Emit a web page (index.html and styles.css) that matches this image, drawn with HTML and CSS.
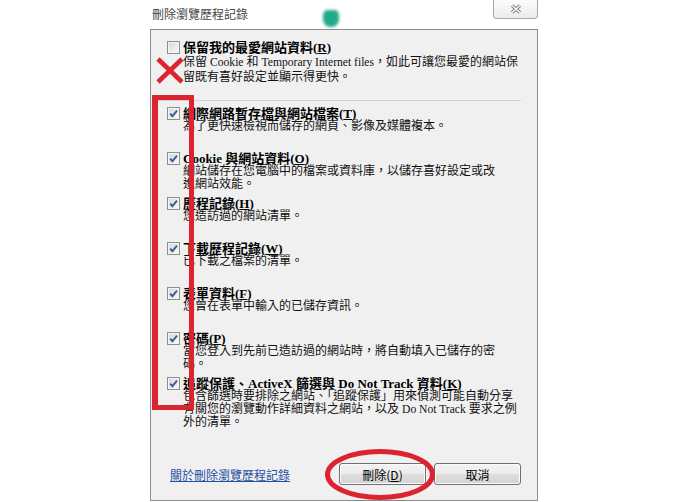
FILE: index.html
```html
<!DOCTYPE html>
<html>

<head>
    <meta charset="utf-8">
    <title>刪除瀏覽歷程記錄</title>
    <link rel="stylesheet" href="styles.css">
</head>

<body>
    <div class="window">
        <div class="titlebar">
            <span class="title">刪除瀏覽歷程記錄</span>
            <div class="close">
                <svg width="12" height="10" viewBox="0 0 12 10">
                    <path d="M2 1.5 L10 8.5 M10 1.5 L2 8.5" stroke="#7d7d7d" stroke-width="3.4" fill="none"/>
                    <path d="M2 1.5 L10 8.5 M10 1.5 L2 8.5" stroke="#ffffff" stroke-width="1.4" fill="none"/>
                </svg>
            </div>
        </div>

        <div class="panel">
            <div class="item first">
                <span class="box"></span>
                <div class="text">
                    <div class="name">保留我的最愛網站資料(<u>R</u>)</div>
                    <div class="desc">保留 <span class="lat">Cookie</span> 和 <span class="lat">Temporary Internet files</span>，如此可讓您最愛的網站保<br>留既有喜好設定並顯示得更快。</div>
                </div>
            </div>

            <div class="sep"></div>

            <div class="list">
                <div class="item">
                    <span class="box checked"><svg width="11" height="11" viewBox="0 0 11 11"><path d="M2.2 5.6 L4.4 8.2 L9 2.6" stroke="#3a5a9c" stroke-width="1.9" fill="none"/></svg></span>
                    <div class="text">
                        <div class="name">網際網路暫存檔與網站檔案(<u>T</u>)</div>
                        <div class="desc">為了更快速檢視而儲存的網頁、影像及媒體複本。</div>
                    </div>
                </div>
                <div class="item">
                    <span class="box checked"><svg width="11" height="11" viewBox="0 0 11 11"><path d="M2.2 5.6 L4.4 8.2 L9 2.6" stroke="#3a5a9c" stroke-width="1.9" fill="none"/></svg></span>
                    <div class="text">
                        <div class="name">Cookie 與網站資料(<u>O</u>)</div>
                        <div class="desc">網站儲存在您電腦中的檔案或資料庫，以儲存喜好設定或改<br>進網站效能。</div>
                    </div>
                </div>
                <div class="item">
                    <span class="box checked"><svg width="11" height="11" viewBox="0 0 11 11"><path d="M2.2 5.6 L4.4 8.2 L9 2.6" stroke="#3a5a9c" stroke-width="1.9" fill="none"/></svg></span>
                    <div class="text">
                        <div class="name">歷程記錄(<u>H</u>)</div>
                        <div class="desc">您造訪過的網站清單。</div>
                    </div>
                </div>
                <div class="item">
                    <span class="box checked"><svg width="11" height="11" viewBox="0 0 11 11"><path d="M2.2 5.6 L4.4 8.2 L9 2.6" stroke="#3a5a9c" stroke-width="1.9" fill="none"/></svg></span>
                    <div class="text">
                        <div class="name">下載歷程記錄(<u>W</u>)</div>
                        <div class="desc">已下載之檔案的清單。</div>
                    </div>
                </div>
                <div class="item">
                    <span class="box checked"><svg width="11" height="11" viewBox="0 0 11 11"><path d="M2.2 5.6 L4.4 8.2 L9 2.6" stroke="#3a5a9c" stroke-width="1.9" fill="none"/></svg></span>
                    <div class="text">
                        <div class="name">表單資料(<u>F</u>)</div>
                        <div class="desc">您曾在表單中輸入的已儲存資訊。</div>
                    </div>
                </div>
                <div class="item">
                    <span class="box checked"><svg width="11" height="11" viewBox="0 0 11 11"><path d="M2.2 5.6 L4.4 8.2 L9 2.6" stroke="#3a5a9c" stroke-width="1.9" fill="none"/></svg></span>
                    <div class="text">
                        <div class="name">密碼(<u>P</u>)</div>
                        <div class="desc">當您登入到先前已造訪過的網站時，將自動填入已儲存的密<br>碼。</div>
                    </div>
                </div>
                <div class="item last">
                    <span class="box checked"><svg width="11" height="11" viewBox="0 0 11 11"><path d="M2.2 5.6 L4.4 8.2 L9 2.6" stroke="#3a5a9c" stroke-width="1.9" fill="none"/></svg></span>
                    <div class="text">
                        <div class="name">追蹤保護、ActiveX 篩選與 Do Not Track 資料(<u>K</u>)</div>
                        <div class="desc">包含篩選時要排除之網站、「追蹤保護」用來偵測可能自動分享<br>有關您的瀏覽動作詳細資料之網站，以及 <span class="lat">Do Not Track</span> 要求之例<br>外的清單。</div>
                    </div>
                </div>
            </div>

            <div class="footer">
                <a href="#" class="link">關於刪除瀏覽歷程記錄</a>
                <div class="buttons">
                    <button class="btn">刪除(<u>D</u>)</button>
                    <button class="btn">取消</button>
                </div>
            </div>
        </div>
    </div>

    <!-- aero glass bleed in the title bar -->
    <div class="glow"></div>

    <!-- red annotations drawn over the screenshot -->
    <svg class="mark-x" width="30" height="30" viewBox="0 0 30 30">
        <path d="M3 3 L27 26 M27 3 L3 26" stroke="#dc2430" stroke-width="4.6" fill="none"/>
    </svg>
    <div class="mark-box"></div>
    <svg class="mark-ring" width="116" height="58" viewBox="0 0 116 58">
        <ellipse cx="58" cy="28.5" rx="52.5" ry="23" stroke="#dc2430" stroke-width="5" fill="none"/>
    </svg>
</body>

</html>
```

FILE: styles.css
```css
body {
    margin: 0;
    width: 700px;
    height: 502px;
    overflow: hidden;
    position: relative;
    background-color: #ffffff;
    font-family: "Liberation Serif", "Noto Sans CJK TC", serif;
    font-size: 12px;
    color: #111111;
}

.window {
    margin-left: 150px;
    width: 388px;
}

.titlebar {
    height: 29px;
    display: flex;
    justify-content: space-between;
    align-items: flex-start;
}

.title {
    font-family: "Noto Sans CJK TC", sans-serif;
    font-size: 12px;
    line-height: 14px;
    color: #454545;
    padding: 7px 0 0 2px;
}

.close {
    width: 45px;
    height: 20px;
    margin-top: -1px;
    box-sizing: border-box;
    border: 1px solid #a8a8a8;
    border-top: none;
    border-radius: 0 0 4px 4px;
    background: linear-gradient(#fdfdfd, #ececec);
    display: flex;
    align-items: center;
    justify-content: center;
}

.panel {
    height: 472px;
    box-sizing: border-box;
    border: 1px solid #8d8d8d;
    background-color: #f0f0f0;
    padding: 11px 16px 15px 16px;
    display: flex;
    flex-direction: column;
}

.item {
    display: flex;
    align-items: flex-start;
    height: 45px;
    flex-shrink: 0;
}

.item.first {
    height: auto;
}

.item.last {
    height: auto;
}

.box {
    width: 13px;
    height: 13px;
    box-sizing: border-box;
    border: 1px solid #8e8f8f;
    background: linear-gradient(135deg, #d6d6d6, #fbfbfb);
    box-shadow: inset 0 0 0 1px #f4f4f4;
    margin-right: 3px;
    flex-shrink: 0;
    display: flex;
    align-items: center;
    justify-content: center;
}

.box svg {
    display: block;
}

.name {
    font-size: 13px;
    font-weight: bold;
    line-height: 13px;
    color: #000000;
    white-space: nowrap;
}

.desc {
    line-height: 13px;
    white-space: nowrap;
}

.first .name,
.first .desc {
    line-height: 14px;
}

.lat {
    font-size: 11.6px;
}

.sep {
    height: 1px;
    background-color: #d2d2d2;
    margin: 16px 0 6px -9px;
    flex-shrink: 0;
}

.footer {
    margin-top: auto;
    display: flex;
    justify-content: space-between;
    align-items: center;
    padding-left: 3px;
}

.link {
    font-family: "Noto Sans CJK TC", sans-serif;
    font-size: 12px;
    color: #1f50a3;
    text-decoration: underline;
}

.buttons {
    display: flex;
    gap: 8px;
}

.btn {
    width: 87px;
    height: 22px;
    padding: 0;
    box-sizing: border-box;
    border: 1px solid #707070;
    border-radius: 3px;
    background: linear-gradient(#f4f4f4 0%, #ebebeb 50%, #dedede 51%, #d3d3d3 100%);
    box-shadow: inset 0 0 0 1px #fbfbfb;
    font-family: "Noto Sans CJK TC", sans-serif;
    font-size: 12px;
    color: #000000;
}

.glow {
    position: absolute;
    left: 323px;
    top: 10px;
    width: 16px;
    height: 17px;
    border-radius: 30% 30% 45% 45%;
    background-color: #22a98b;
    filter: blur(1.5px);
}

.mark-x {
    position: absolute;
    left: 155px;
    top: 56px;
}

.mark-box {
    position: absolute;
    left: 152px;
    top: 95px;
    width: 42px;
    height: 315px;
    box-sizing: border-box;
    border: 5px solid #dc2430;
    border-left-width: 6px;
}

.mark-ring {
    position: absolute;
    left: 322px;
    top: 446px;
}
```
